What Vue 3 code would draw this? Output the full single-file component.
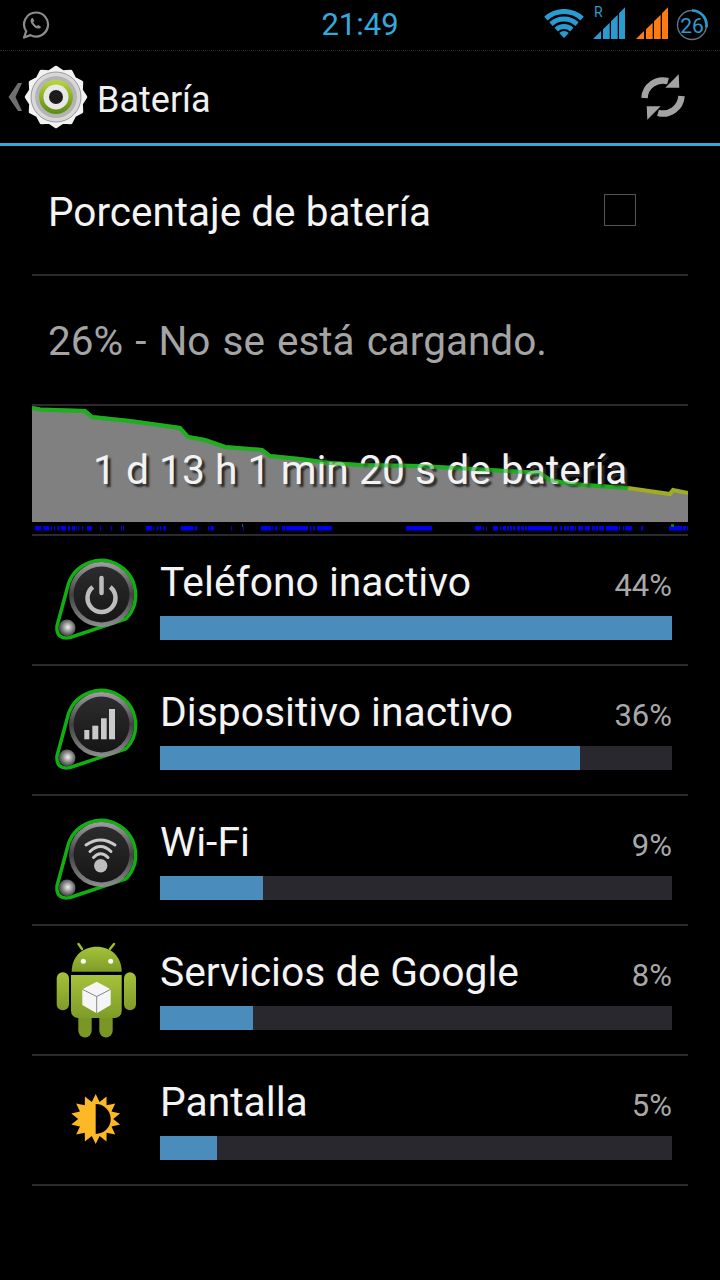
<template>
  <main class="screen">
    <!-- status bar -->
    <header class="status-bar">
      <div class="status-left">
        <svg class="whatsapp" width="30" height="30" viewBox="0 0 30 30">
          <path d="M15 2.500a12 12 0 1 1-5.600 22.600L3 27.500l2.200-6.200A12 12 0 0 1 15 2.500z" fill="none" stroke="#8c8c8c" stroke-width="2.200" stroke-linejoin="round" />
          <path d="M10.800 8.200c-1.800 1.200-1.600 3.400.2 6 1.800 2.700 4.200 4.600 6.600 4.400 1.400-.1 2.200-1 2.400-1.900l-2.800-1.800-1.200 1.200c-1.400-.5-3.100-2.200-3.800-3.800l1.100-1.200-1.400-3c-.2 0-.4 0-1.100.1z" fill="#8c8c8c" />
        </svg>
      </div>
      <div class="clock">21:49</div>
      <div class="status-right">
        <svg class="wifi" width="40" height="30" viewBox="0 0 40 30" fill="none" stroke="#2a9bd0" stroke-width="5">
          <path d="M1.900 9.600A26.500 26.500 0 0 1 38.100 9.600" />
          <path d="M7 15.100A19 19 0 0 1 33 15.100" />
          <path d="M12.200 20.600A11.500 11.500 0 0 1 27.800 20.600" />
          <path d="M20 29L15.200 23.900A7 7 0 0 1 24.800 23.900Z" fill="#2a9bd0" stroke="none" />
        </svg>
        <svg class="signal signal-blue" width="33" height="40" viewBox="0 -6 33 40" fill="#2a9bd0">
          <text x="1" y="11" class="roaming">R</text>
          <path v-for="b in signalBars" :key="b" :d="b" />
        </svg>
        <svg class="signal signal-orange" width="33" height="40" viewBox="0 -6 33 40" fill="#ff7a12">
          <path v-for="b in signalBars" :key="b" :d="b" />
        </svg>
        <svg class="battery" width="32" height="32" viewBox="0 0 32 32" fill="none">
          <circle cx="16" cy="16" r="14.500" stroke="#5f7480" stroke-width="1.400" />
          <path d="M16 1.500A14.500 14.500 0 0 1 30.300 18.500" stroke="#2a9bd0" stroke-width="2.600" />
          <text x="16" y="23.500" class="battery-num">26</text>
        </svg>
      </div>
    </header>

    <!-- action bar -->
    <div class="action-bar">
      <svg class="back" width="14" height="28" viewBox="0 0 14 28">
        <path d="M10 0h4L7.500 14 14 28h-4L.5 14z" fill="#6f6f6f" />
      </svg>
      <svg class="gear" width="64" height="64" viewBox="0 0 64 64">
        <defs>
          <linearGradient id="gearGreen" x1="0" y1="0" x2="0" y2="1">
            <stop offset="0" stop-color="#bcd63c" />
            <stop offset="1" stop-color="#5b8a12" />
          </linearGradient>
        </defs>
        <path :d="gearPath" fill="#f2f2f2" stroke="#f2f2f2" stroke-width="3.500" stroke-linejoin="round" />
        <circle cx="32" cy="32" r="25" fill="#d8d8d8" stroke="#9a9a9a" stroke-width="1" />
        <circle cx="32" cy="32" r="21" fill="#b4b4b4" />
        <circle cx="32" cy="32" r="17" fill="url(#gearGreen)" />
        <circle cx="32" cy="32" r="12.500" fill="#e8e8e8" />
        <circle cx="32" cy="32" r="7" fill="#1c1c1c" />
      </svg>
      <span class="action-title">Batería</span>
      <svg class="refresh" width="48" height="48" viewBox="0 0 48 48" fill="#a3a3a3">
        <path d="M5.500 25A18.500 18.500 0 0 1 29 8.200" fill="none" stroke="#a3a3a3" stroke-width="6.500" />
        <path d="M39.700 1.300L40.300 14.700L26.300 14.700Z" />
        <path d="M42.500 23A18.500 18.500 0 0 1 19 39.800" fill="none" stroke="#a3a3a3" stroke-width="6.500" />
        <path d="M8.300 46.700L7.700 33.300L21.700 33.300Z" />
      </svg>
    </div>

    <section class="content">
      <div class="pref-row">
        <span class="pref-title">Porcentaje de batería</span>
        <span class="checkbox"></span>
      </div>
      <div class="state-row">26% - No se está cargando.</div>

      <!-- history graph -->
      <div class="graph">
        <svg class="graph-svg" width="656" height="128" viewBox="32 406 656 128">
          <path :d="areaPath" fill="#808080" />
          <path :d="greenPath" fill="none" stroke="#1fae1f" stroke-width="4" />
          <path :d="yellowPath" fill="none" stroke="#a0ad1e" stroke-width="4" />
          <rect v-for="t in ticks" :key="t[0]" :x="t[0]" y="526" :width="t[1]" height="4.500" fill="#0000ee" />
          <rect x="242" y="524" width="1" height="3" fill="#0a7a0a" />
          <rect x="671" y="524" width="3" height="3" fill="#0a7a0a" />
        </svg>
        <div class="graph-label">1 d 13 h 1 min 20 s de batería</div>
        <!-- the line shows through the label in the reference -->
        <svg class="graph-over" width="656" height="128" viewBox="32 406 656 128">
          <path :d="greenPath" fill="none" stroke="#1fae1f" stroke-width="4" opacity="0.55" />
        </svg>
      </div>

      <!-- usage rows -->
      <div v-for="item in usage" :key="item.name" class="usage-row">
        <div class="usage-icon">
          <svg v-if="item.kind !== 'android' && item.kind !== 'sun'" width="88" height="88" viewBox="0 0 88 88">
            <defs>
              <linearGradient id="ringGrad" x1="0" y1="0" x2="0" y2="1">
                <stop offset="0" stop-color="#a0a0a0" />
                <stop offset="0.5" stop-color="#424242" />
                <stop offset="1" stop-color="#8e8e8e" />
              </linearGradient>
              <linearGradient id="dialGrad" x1="0" y1="0" x2="0" y2="1">
                <stop offset="0" stop-color="#2c2c2e" />
                <stop offset="1" stop-color="#161616" />
              </linearGradient>
              <radialGradient id="ballGrad" cx="0.55" cy="0.45" r="0.6">
                <stop offset="0" stop-color="#f2f2f2" />
                <stop offset="0.55" stop-color="#808080" />
                <stop offset="1" stop-color="#2c2c2c" />
              </radialGradient>
            </defs>
            <path d="M16.700 27A34.500 34.500 0 1 1 73.900 62.900L18 81.500Q4 84 5 70Z" fill="#000" stroke="#0fb00f" stroke-width="3.500" stroke-linejoin="round" />
            <circle cx="49.500" cy="38.500" r="32.500" fill="url(#ringGrad)" />
            <circle cx="49.500" cy="38.500" r="28" fill="url(#dialGrad)" />
            <circle cx="15" cy="72" r="8.500" fill="url(#ballGrad)" />
            <g v-if="item.kind === 'power'" fill="none" stroke="#bdbdbd" stroke-width="4.500">
              <path d="M40.800 31A14 14 0 1 0 58.200 31" />
              <path d="M49.500 22V37" stroke-linecap="round" />
            </g>
            <g v-else-if="item.kind === 'signal'" fill="#cacaca">
              <rect x="32.300" y="44" width="5" height="9.300" />
              <rect x="40.300" y="39.700" width="6" height="13.600" />
              <rect x="49" y="32.300" width="5.700" height="21" />
              <rect x="57" y="23" width="6" height="30.300" />
            </g>
            <g v-else fill="none" stroke="#cacaca" stroke-width="3" stroke-linecap="round">
              <path d="M34 29Q48.500 19 63 29" />
              <path d="M38 35.500Q48.500 25.500 59 35.500" />
              <path d="M41.500 41.500Q48.500 34 56 41.500" />
              <circle cx="48.700" cy="49.700" r="6.700" fill="#bdbdbd" stroke="none" />
            </g>
          </svg>

          <svg v-else-if="item.kind === 'android'" class="android" width="88" height="88" viewBox="0 0 88 88">
            <defs>
              <linearGradient id="droidGrad" x1="0" y1="0" x2="0" y2="1">
                <stop offset="0" stop-color="#a4c23a" />
                <stop offset="1" stop-color="#7f9c28" />
              </linearGradient>
            </defs>
            <g stroke="#9dbb2e" stroke-width="2.500" stroke-linecap="round">
              <path d="M30 3L26.500 -2" />
              <path d="M58 3L62 -2" />
            </g>
            <path d="M19.700 25.700C19.700 10 31 .7 44.700 .7S69.700 10 69.700 25.700Z" fill="url(#droidGrad)" />
            <circle cx="31.300" cy="15.300" r="2.500" fill="#fff" />
            <circle cx="58.700" cy="15.300" r="2.500" fill="#fff" />
            <path d="M19 29H69.700V65A7 7 0 0 1 62.700 72H26A7 7 0 0 1 19 65Z" fill="url(#droidGrad)" />
            <rect x="4.700" y="26.300" width="12.300" height="38" rx="6" fill="url(#droidGrad)" />
            <rect x="72" y="26.300" width="12" height="38" rx="6" fill="url(#droidGrad)" />
            <path d="M26.300 72H39.700V84.700A6.700 6.700 0 0 1 26.300 84.700Z" fill="#7a9624" />
            <path d="M47.300 72H60.700V84.700A6.700 6.700 0 0 1 47.300 84.700Z" fill="#7a9624" />
            <path d="M44.700 35.700L58.700 43.300V59L44.700 67.300L30.300 59V43.300Z" fill="#f5f5f5" />
            <path d="M30.300 43.300L44.700 50.500L58.700 43.300M44.700 50.500V67.300" fill="none" stroke="#6a6a6a" stroke-width="0.800" />
          </svg>

          <svg v-else width="88" height="88" viewBox="0 0 88 88">
            <path :d="sunPath" fill="#fdb825" />
            <path d="M43.700 28A15 15 0 0 1 43.700 58Z" fill="#000" />
          </svg>
        </div>
        <div class="usage-body">
          <div class="usage-head">
            <span class="usage-name">{{ item.name }}</span>
            <span class="usage-pct">{{ item.pct }}%</span>
          </div>
          <div class="track">
            <div class="fill" :style="{ width: item.bar + '%' }"></div>
          </div>
        </div>
      </div>
    </section>
  </main>
</template>

<script setup>
const usage = [
  { name: 'Teléfono inactivo', pct: 44, bar: 100, kind: 'power' },
  { name: 'Dispositivo inactivo', pct: 36, bar: 82, kind: 'signal' },
  { name: 'Wi-Fi', pct: 9, bar: 20.2, kind: 'wifi' },
  { name: 'Servicios de Google', pct: 8, bar: 18.2, kind: 'android' },
  { name: 'Pantalla', pct: 5, bar: 11.2, kind: 'sun' }
]

const signalBars = [
  'M0 33L8 25V33Z',
  'M10 33V23.300L16.700 16.700V33Z',
  'M18 33V15.300L24.700 8.700V33Z',
  'M26 33V7.300L32 1.300V33Z'
]

// battery curve, screen coordinates
const green = [
  [32, 408], [40, 409.5], [85, 411], [92, 417], [130, 421], [180, 428], [188, 437], [205, 440],
  [225, 447], [262, 450], [270, 456], [300, 459], [330, 463], [360, 465], [420, 466], [490, 470],
  [540, 473], [550, 480], [570, 484], [628, 488]
]
const yellow = [[628, 488], [670, 494], [673, 490], [688, 493]]
const toLine = pts => pts.map((p, i) => (i ? 'L' : 'M') + p[0] + ' ' + p[1]).join('')
const greenPath = toLine(green)
const yellowPath = toLine(yellow)
const areaPath = toLine([...green, ...yellow]) + 'L688 522L32 522Z'

// wakelock segments, as read off the reference at 3x
const tickSpans = [
  [105, 124], [130, 148], [153, 156], [162, 165], [172, 178], [183, 198], [204, 211], [216, 225],
  [228, 230], [235, 238], [246, 249], [261, 276], [300, 303], [333, 336], [363, 366], [369, 372],
  [438, 456], [460, 463], [470, 475], [480, 484], [490, 498], [543, 580], [585, 592], [624, 628],
  [632, 642], [693, 696], [729, 732], [783, 814], [817, 820], [825, 832], [836, 838], [846, 856],
  [858, 924], [930, 934], [939, 945], [951, 996], [1218, 1296], [1425, 1443], [1449, 1452],
  [1458, 1461], [1479, 1494], [1500, 1503], [1509, 1518], [1521, 1527], [1530, 1536], [1539, 1545],
  [1551, 1560], [1563, 1572], [1575, 1581], [1584, 1656], [1662, 1671], [1680, 1686], [1692, 1698],
  [1701, 1707], [1710, 1722], [1725, 1728], [1734, 1749], [1755, 1770], [1776, 1785], [1788, 1794],
  [1797, 1812], [1818, 1854], [1857, 1860], [1869, 1872], [1875, 1896], [1923, 1929], [2007, 2046],
  [2049, 2058], [2061, 2064]
]
const ticks = tickSpans.map(s => [s[0] / 3, (s[1] - s[0]) / 3])

function star(cx, cy, outer, inner, n, rot) {
  let d = ''
  for (let i = 0; i < n * 2; i++) {
    const r = i % 2 ? inner : outer
    const a = rot + (i * Math.PI) / n
    d += (i ? 'L' : 'M') + (cx + r * Math.sin(a)).toFixed(1) + ' ' + (cy - r * Math.cos(a)).toFixed(1)
  }
  return d + 'Z'
}
const sunPath = star(43.7, 43, 25, 17.5, 14, 0)
const gearPath = star(32, 32, 29.5, 26, 12, 0)
</script>

<style>
html, body { background: #000; }
</style>

<style scoped>
.screen {
  width: 720px;
  height: 1280px;
  background: #000;
  overflow: hidden;
  font-family: Roboto, "Liberation Sans", sans-serif;
  color: #fff;
}

/* ── status bar ── */
.status-bar {
  height: 50px;
  display: grid;
  grid-template-columns: 1fr auto 1fr;
  align-items: center;
  border-bottom: 1px dotted #2c2c2c;
  box-sizing: content-box;
}
.status-left { padding-left: 21px; display: flex; }
.clock {
  color: #33a9dc;
  font-size: 31px;
  line-height: 50px;
}
.status-right {
  display: flex;
  align-items: center;
  justify-content: flex-end;
  padding-right: 12px;
}
.wifi { margin-bottom: 3px; }
.signal { margin-bottom: 10px; }
.signal-blue { margin-left: 9px; }
.signal-orange { margin-left: 10px; }
.battery { margin-left: 7px; }
.roaming { font-size: 14px; fill: #2a9bd0; font-family: Roboto, sans-serif; }
.battery-num {
  font-size: 21px;
  fill: #2a9bd0;
  text-anchor: middle;
  font-family: Roboto, sans-serif;
}

/* ── action bar ── */
.action-bar {
  height: 92px;
  display: flex;
  align-items: center;
  border-bottom: 3px solid #33a9dc;
  padding: 0 33px 0 8px;
}
.back { flex-shrink: 0; }
.gear { margin-left: 2px; }
.action-title {
  font-size: 36px;
  margin: 5px 0 0 9px;
  color: #f0f0f0;
}
.refresh { margin-left: auto; }

/* ── list ── */
.content { margin: 0 32px; }
.pref-row {
  height: 130px;
  box-sizing: border-box;
  border-bottom: 2px solid #2a2a2a;
  display: flex;
  align-items: center;
  justify-content: space-between;
  padding: 0 52px 0 16px;
}
.pref-title { font-size: 40.5px; color: #f4f4f4; margin-top: 3px; }
.checkbox {
  width: 30px;
  height: 30px;
  border: 1.5px solid #555;
}
.state-row {
  height: 130px;
  box-sizing: border-box;
  border-bottom: 2px solid #2a2a2a;
  display: flex;
  align-items: center;
  padding: 2px 0 0 16px;
  font-size: 40.5px;
  word-spacing: 2px;
  color: #a4a4a4;
}

.graph {
  position: relative;
  height: 130px;
  border-bottom: 2px solid #2a2a2a;
  box-sizing: border-box;
}
.graph-svg { display: block; }
.graph-over {
  position: absolute;
  left: 0;
  top: 0;
}
.graph-label {
  position: absolute;
  left: 0;
  right: 0;
  top: 41px;
  text-align: center;
  font-size: 40.8px;
  line-height: 46px;
  color: #f2f2f2;
  text-shadow: 3px 3px 2px #2a2a2a;
}

.usage-row {
  height: 130px;
  box-sizing: border-box;
  border-bottom: 2px solid #2a2a2a;
  display: flex;
  align-items: center;
  padding: 0 16px 0 20px;
}
.usage-icon {
  width: 88px;
  height: 88px;
  flex-shrink: 0;
}
.usage-icon svg { display: block; overflow: visible; }
.usage-body {
  flex: 1;
  align-self: flex-start;
  margin-left: 20px;
  padding-top: 16px;
}
.usage-head {
  display: flex;
  align-items: baseline;
  justify-content: space-between;
  height: 64px;
}
.usage-name { font-size: 40.8px; line-height: 60px; color: #f4f4f4; }
.usage-pct { font-size: 31px; color: #a8a8a8; }
.track {
  height: 24px;
  background: #29282e;
}
.fill {
  height: 100%;
  background: #4a8cbc;
}
</style>
